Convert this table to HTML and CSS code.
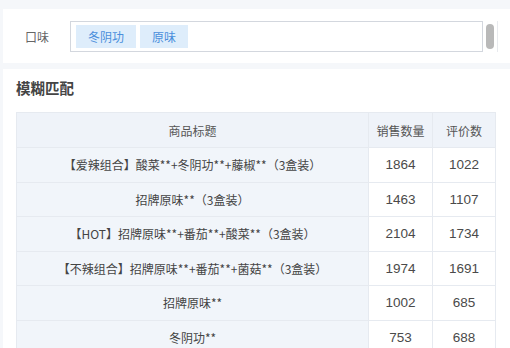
FILE: index.html
```html
<!DOCTYPE html>
<html lang="zh">
<head>
<meta charset="utf-8">
<link rel="stylesheet" href="styles.css">
</head>
<body>
<div class="card filter">
  <span class="label">口味</span>
  <div class="input">
    <span class="tag">冬阴功</span>
    <span class="tag">原味</span>
  </div>
  <div class="scroll"><span class="thumb"></span></div>
</div>
<div class="card result">
  <div class="title">模糊匹配</div>
  <table class="grid">
    <colgroup><col class="c1"><col class="c2"><col class="c3"></colgroup>
    <thead>
      <tr><th class="first">商品标题</th><th>销售数量</th><th>评价数</th></tr>
    </thead>
    <tbody>
      <tr><td class="first">【爱辣组合】酸菜**+冬阴功**+藤椒**（3盒装）</td><td>1864</td><td>1022</td></tr>
      <tr><td class="first">招牌原味**（3盒装）</td><td>1463</td><td>1107</td></tr>
      <tr><td class="first">【HOT】招牌原味**+番茄**+酸菜**（3盒装）</td><td>2104</td><td>1734</td></tr>
      <tr><td class="first">【不辣组合】招牌原味**+番茄**+菌菇**（3盒装）</td><td>1974</td><td>1691</td></tr>
      <tr><td class="first">招牌原味**</td><td>1002</td><td>685</td></tr>
      <tr><td class="first">冬阴功**</td><td>753</td><td>688</td></tr>
    </tbody>
  </table>
</div>
</body>
</html>
```
FILE: styles.css
```css
html, body {
  margin: 0;
  padding: 0;
  background: #f5f7fa;
  font-family: "Noto Sans CJK SC", "Liberation Sans", sans-serif;
  overflow: hidden;
  height: 348px;
}
.card {
  background: #fff;
  margin-left: 3px;
}
.filter {
  margin-top: 9px;
  height: 54px;
  display: flex;
  align-items: center;
  box-sizing: border-box;
}
.label {
  font-size: 12px;
  color: #666;
  width: 67px;
  padding-left: 22px;
  box-sizing: border-box;
}
.input {
  width: 413px;
  height: 31px;
  box-sizing: border-box;
  border: 1px solid #d3d7de;
  display: flex;
  align-items: center;
  gap: 4px;
  padding-left: 5px;
}
.tag {
  height: 23px;
  line-height: 23px;
  padding: 0 12px;
  font-size: 12px;
  color: #4b8fdc;
  background: #deedfb;
}
.scroll {
  margin-left: 3px;
  width: 11px;
  height: 31px;
  border-right: 1px solid #e8eaee;
  display: flex;
  align-items: center;
}
.thumb {
  width: 8px;
  height: 25px;
  border-radius: 4px;
  background: #b9b9b9;
}
.result {
  margin-top: 6px;
  padding: 0 15px 0 13px;
  height: 290px;
}
.title {
  font-size: 14.5px;
  font-weight: bold;
  color: #444;
  height: 43px;
  line-height: 38px;
}
.grid {
  width: 479px;
  border-collapse: collapse;
  table-layout: fixed;
  font-size: 12px;
  color: #444;
}
.c1 { width: 352px; }
.c2 { width: 64px; }
.c3 { width: 63px; }
.grid th, .grid td {
  border: 1px solid #e6eaf0;
  text-align: center;
  padding: 0;
  white-space: nowrap;
  overflow: hidden;
}
.grid th {
  height: 34px;
  font-weight: normal;
  color: #555;
  background: #eff3f9;
}
.grid td {
  height: 33.5px;
}
.grid td.first {
  background: #f1f5fa;
}
.grid td:not(.first) {
  font-family: "Liberation Sans", "Noto Sans CJK SC", sans-serif;
  font-size: 13.5px;
  color: #4a4a4a;
}
```
